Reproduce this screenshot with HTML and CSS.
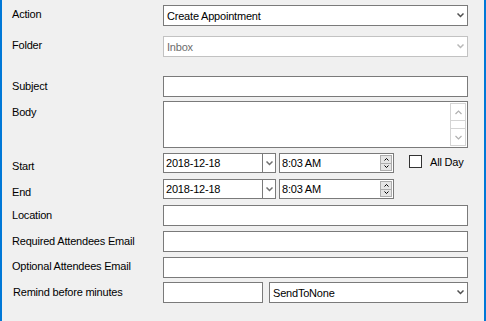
FILE: index.html
```html
<!DOCTYPE html>
<html lang="en">
<head>
    <meta charset="UTF-8">
    <title>Create Appointment</title>
    <link rel="stylesheet" href="styles.css">
</head>
<body>
    <div class="frame">
        <div class="row">
            <label class="lbl p3">Action</label>
            <div class="field combo">
                <span>Create Appointment</span>
                <svg class="chev" width="7" height="5" viewBox="0 0 7 5"><polyline points="0.5,0.5 3.5,3.5 6.5,0.5"/></svg>
            </div>
        </div>
        <div class="row mt10">
            <label class="lbl p3">Folder</label>
            <div class="field combo disabled">
                <span>Inbox</span>
                <svg class="chev" width="7" height="5" viewBox="0 0 7 5"><polyline points="0.5,0.5 3.5,3.5 6.5,0.5"/></svg>
            </div>
        </div>
        <div class="row mt19">
            <label class="lbl p4">Subject</label>
            <div class="field"></div>
        </div>
        <div class="row mt4">
            <label class="lbl p5">Body</label>
            <div class="field memo">
                <div class="vscroll">
                    <div class="sbtn"><svg width="7" height="5" viewBox="0 0 7 5"><polyline points="0.5,4 3.5,1 6.5,4"/></svg></div>
                    <div class="track"></div>
                    <div class="sbtn"><svg width="7" height="5" viewBox="0 0 7 5"><polyline points="0.5,1 3.5,4 6.5,1"/></svg></div>
                </div>
            </div>
        </div>
        <div class="row mt5">
            <label class="lbl p7">Start</label>
            <div class="field date">
                <span class="val">2018-12-18</span>
                <div class="drop"><svg width="7" height="5" viewBox="0 0 7 5"><polyline points="0.5,0.5 3.5,3.5 6.5,0.5"/></svg></div>
            </div>
            <div class="field time">
                <span class="val">8:03 AM</span>
                <div class="spin">
                    <div class="sp"><svg width="5" height="3" viewBox="0 0 5 3"><polyline points="0.5,2.5 2.5,0.5 4.5,2.5"/></svg></div>
                    <div class="sp"><svg width="5" height="3" viewBox="0 0 5 3"><polyline points="0.5,0.5 2.5,2.5 4.5,0.5"/></svg></div>
                </div>
            </div>
            <div class="check"></div>
            <span class="check-lbl">All Day</span>
        </div>
        <div class="row mt6">
            <label class="lbl p7">End</label>
            <div class="field date">
                <span class="val">2018-12-18</span>
                <div class="drop"><svg width="7" height="5" viewBox="0 0 7 5"><polyline points="0.5,0.5 3.5,3.5 6.5,0.5"/></svg></div>
            </div>
            <div class="field time">
                <span class="val">8:03 AM</span>
                <div class="spin">
                    <div class="sp"><svg width="5" height="3" viewBox="0 0 5 3"><polyline points="0.5,2.5 2.5,0.5 4.5,2.5"/></svg></div>
                    <div class="sp"><svg width="5" height="3" viewBox="0 0 5 3"><polyline points="0.5,0.5 2.5,2.5 4.5,0.5"/></svg></div>
                </div>
            </div>
        </div>
        <div class="row mt6">
            <label class="lbl p4">Location</label>
            <div class="field"></div>
        </div>
        <div class="row mt5">
            <label class="lbl p4">Required Attendees Email</label>
            <div class="field"></div>
        </div>
        <div class="row mt5">
            <label class="lbl p3">Optional Attendees Email</label>
            <div class="field"></div>
        </div>
        <div class="row mt4">
            <label class="lbl p4 indent">Remind before minutes</label>
            <div class="field minutes"></div>
            <div class="field combo send">
                <span>SendToNone</span>
                <svg class="chev" width="7" height="5" viewBox="0 0 7 5"><polyline points="0.5,0.5 3.5,3.5 6.5,0.5"/></svg>
            </div>
        </div>
    </div>
</body>
</html>
```

FILE: styles.css
```css
body {
    margin: 0;
    padding: 0;
    background-color: #f0f0f0;
    font-family: "Liberation Sans", Arial, sans-serif;
    font-size: 11px;
    color: #000;
}
.frame {
    width: 486px;
    height: 321px;
    box-sizing: border-box;
    border-left: 2px solid #0078d7;
    border-right: 2px solid #0078d7;
    padding: 5px 0 0 10px;
    background-color: #f0f0f0;
}
.row {
    display: flex;
    align-items: flex-start;
}
.mt4 { margin-top: 4px; }
.mt5 { margin-top: 5px; }
.mt6 { margin-top: 6px; }
.mt10 { margin-top: 10px; }
.mt19 { margin-top: 19px; }
.lbl {
    width: 151px;
    flex: none;
    line-height: 13px;
    letter-spacing: -0.2px;
}
.p3 { padding-top: 3px; }
.p4 { padding-top: 4px; }
.p5 { padding-top: 5px; }
.p7 { padding-top: 7px; }
.indent {
    padding-left: 1px;
    width: 150px;
}
.field {
    width: 305px;
    height: 21px;
    box-sizing: border-box;
    border: 1px solid #7a7a7a;
    background: #fff;
    flex: none;
}
.combo {
    display: flex;
    align-items: center;
    justify-content: space-between;
    padding: 0 3px 0 3px;
    letter-spacing: -0.2px;
}
.chev polyline, .drop polyline {
    fill: none;
    stroke: #505050;
    stroke-width: 1.5;
}
.disabled {
    border-color: #c2c2c2;
    color: #6d6d6d;
}
.disabled .chev polyline {
    stroke: #b8b8b8;
}
.memo {
    height: 47px;
    display: flex;
    justify-content: flex-end;
    padding: 1px;
}
.vscroll {
    width: 16px;
    display: flex;
    flex-direction: column;
    border: 1px solid #d4d4d4;
    box-sizing: border-box;
}
.sbtn {
    height: 16px;
    display: flex;
    align-items: center;
    justify-content: center;
}
.track {
    flex: 1;
    border-top: 1px solid #d4d4d4;
    border-bottom: 1px solid #d4d4d4;
}
.sbtn polyline {
    fill: none;
    stroke: #b0b0b0;
    stroke-width: 1.2;
}
.date, .time {
    height: 20px;
    display: flex;
    align-items: center;
}
.date {
    width: 113px;
}
.val {
    flex: 1;
    padding-left: 2px;
    letter-spacing: -0.2px;
}
.drop {
    width: 12px;
    height: 100%;
    border-left: 1px solid #7a7a7a;
    display: flex;
    align-items: center;
    justify-content: center;
}
.drop polyline {
    stroke: #707070;
}
.time {
    width: 115px;
    margin-left: 3px;
    padding: 1px 1px 1px 0;
}
.spin {
    width: 12px;
    height: 16px;
    display: flex;
    flex-direction: column;
    align-self: flex-end;
}
.sp {
    flex: 1;
    background: #e5e5e5;
    border: 1px solid #adadad;
    display: flex;
    align-items: center;
    justify-content: center;
}
.sp + .sp {
    border-top: none;
}
.sp polyline {
    fill: none;
    stroke: #000;
    stroke-width: 1;
}
.check {
    width: 13px;
    height: 13px;
    box-sizing: border-box;
    border: 1px solid #333;
    background: #fff;
    margin: 2px 0 0 15px;
}
.check-lbl {
    margin-left: 8px;
    padding-top: 3px;
    line-height: 13px;
    letter-spacing: -0.2px;
}
.minutes {
    width: 100px;
}
.send {
    width: 199px;
    margin-left: 6px;
}
```
